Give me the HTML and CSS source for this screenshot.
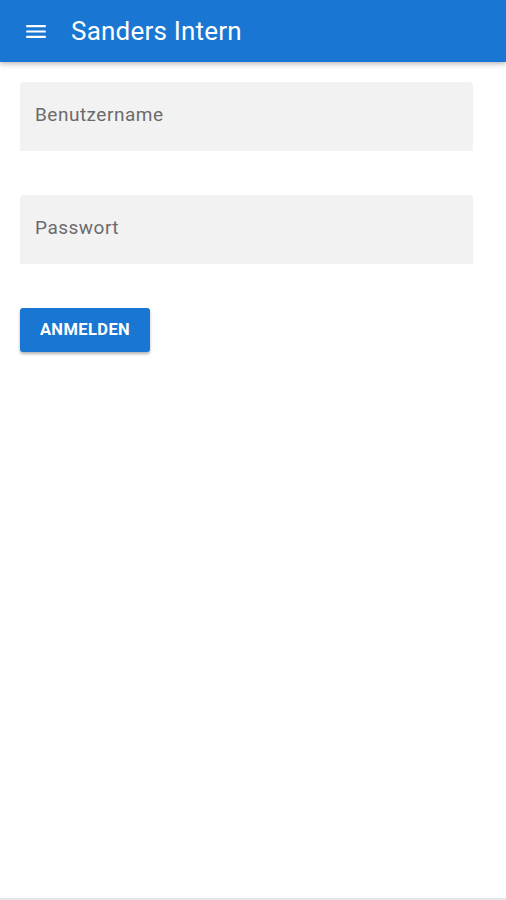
FILE: index.html
```html
<!DOCTYPE html>
<html lang="de">
<head>
  <meta charset="UTF-8" />
  <meta name="viewport" content="width=device-width, initial-scale=1.0" />
  <title>Sanders Intern</title>
  <link rel="stylesheet" href="styles.css">
</head>
<body>
  <header class="toolbar">
    <button class="menu-btn" aria-label="Menü">
      <svg width="24" height="24" viewBox="0 0 24 24"><path d="M3 18h18v-2H3v2zm0-5h18v-2H3v2zm0-7v2h18V6H3z" fill="#fff"/></svg>
    </button>
    <h1 class="title">Sanders Intern</h1>
  </header>

  <main class="login">
    <div class="field">
      <input id="user" type="text" placeholder="Benutzername" />
    </div>
    <div class="field">
      <input id="pass" type="password" placeholder="Passwort" />
    </div>
    <button class="login-btn">ANMELDEN</button>
  </main>

  <div class="bottom-line"></div>
</body>
</html>
```

FILE: styles.css
```css
:root {
  --primary: #1976d2;
  --field-bg: #f2f2f2;
  --hint: #6b6b6b;
}

html, body { height: 100%; }

body {
  margin: 0;
  font-family: Roboto, "Liberation Sans", sans-serif;
  background: #fff;
  display: flex;
  flex-direction: column;
}

.toolbar {
  height: 62px;
  background: var(--primary);
  display: flex;
  align-items: center;
  box-shadow: 0 2px 5px rgba(0, 0, 0, 0.28);
  flex-shrink: 0;
}

.menu-btn {
  background: none;
  border: none;
  padding: 0;
  margin: 0 0 0 23px;
  width: 26px;
  height: 26px;
  display: flex;
  align-items: center;
  justify-content: center;
}
.menu-btn svg { width: 27px; height: 27px; }

.title {
  margin: 0 0 0 22px;
  color: #fff;
  font-size: 26px;
  font-weight: 400;
  letter-spacing: 0.2px;
}

.login {
  flex: 1;
  padding: 20px 33px 0 20px;
  display: flex;
  flex-direction: column;
  align-items: flex-start;
}

.field {
  width: 100%;
  margin-bottom: 44px;
}

.field input {
  box-sizing: border-box;
  width: 100%;
  height: 69px;
  border: none;
  border-radius: 4px 4px 0 0;
  background: var(--field-bg);
  padding: 0 15px 4px;
  font-family: inherit;
  font-size: 19px;
  letter-spacing: 0.5px;
  color: #333;
  outline: none;
}
.field input::placeholder { color: var(--hint); }

.login-btn {
  height: 44px;
  width: 130px;
  background: var(--primary);
  color: #fff;
  border: none;
  border-radius: 3px;
  padding: 0 0 2px;
  font-family: inherit;
  font-size: 16.5px;
  font-weight: 700;
  letter-spacing: 0.4px;
  box-shadow: 0 2px 3px rgba(0, 0, 0, 0.3);
  cursor: pointer;
}

.bottom-line {
  height: 2px;
  background: #e2e6ea;
  flex-shrink: 0;
}
```
